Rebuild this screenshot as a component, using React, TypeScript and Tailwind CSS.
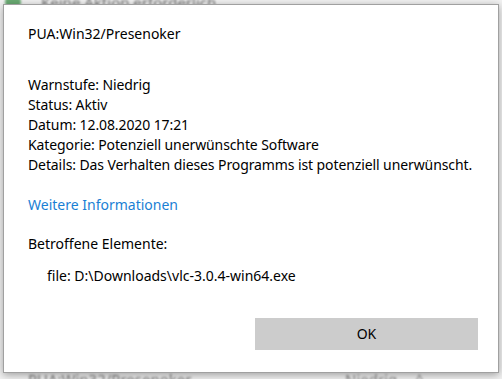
import React from 'react';

const font = { fontFamily: '"Segoe UI", "Noto Sans", "Open Sans", sans-serif' };

const DetailRow = ({ label, value }: { label: string; value: string }) => (
  <div>
    {label}: {value}
  </div>
);

export default function App() {
  return (
    <div
      className="relative w-[502px] h-[379px] overflow-hidden bg-[#f2f2f2] text-[#000]"
      style={font}
    >
      {/* Blurred list behind the dialog */}
      <div className="absolute left-0 top-[-9px] flex items-center gap-[20px] pl-[5px] text-[15px] text-[#777] blur-[1px]">
        <span className="w-[16px] h-[16px] rounded-full bg-[#6aab73]" />
        <span>Keine Aktion erforderlich</span>
      </div>
      <div className="absolute left-[28px] top-[368px] text-[15px] text-[#777] blur-[1px]">
        PUA:Win32/Presenoker
      </div>
      <div className="absolute left-[345px] top-[368px] flex gap-[18px] text-[15px] text-[#888] blur-[1px]">
        <span>Niedrig</span>
        <span>^</span>
      </div>

      {/* Dialog */}
      <div className="relative ml-[3px] mt-[4px] w-[496px] h-[369px] bg-white border border-[#a0a0a0] shadow-[0_2px_8px_rgba(0,0,0,0.35)] flex flex-col text-[14px] leading-[20px] pl-[24px] pr-[2px]">
        <div className="mt-[19px]">PUA:Win32/Presenoker</div>

        <div className="mt-[31px] flex flex-col whitespace-nowrap tracking-[-0.1px]">
          <DetailRow label="Warnstufe" value="Niedrig" />
          <DetailRow label="Status" value="Aktiv" />
          <DetailRow label="Datum" value="12.08.2020 17:21" />
          <DetailRow label="Kategorie" value="Potenziell unerwünschte Software" />
          <DetailRow label="Details" value="Das Verhalten dieses Programms ist potenziell unerwünscht." />
        </div>

        <div className="mt-[20px] text-[#1a7fd4]">Weitere Informationen</div>

        <div className="mt-[19px]">Betroffene Elemente:</div>
        <div className="mt-[12px] pl-[19px]">file: D:\Downloads\vlc-3.0.4-win64.exe</div>

        <div className="mt-auto mb-[22px] pr-[18px] flex justify-end">
          <button className="w-[223px] h-[32px] bg-[#cccccc] text-[14px] text-black">OK</button>
        </div>
      </div>
    </div>
  );
}
